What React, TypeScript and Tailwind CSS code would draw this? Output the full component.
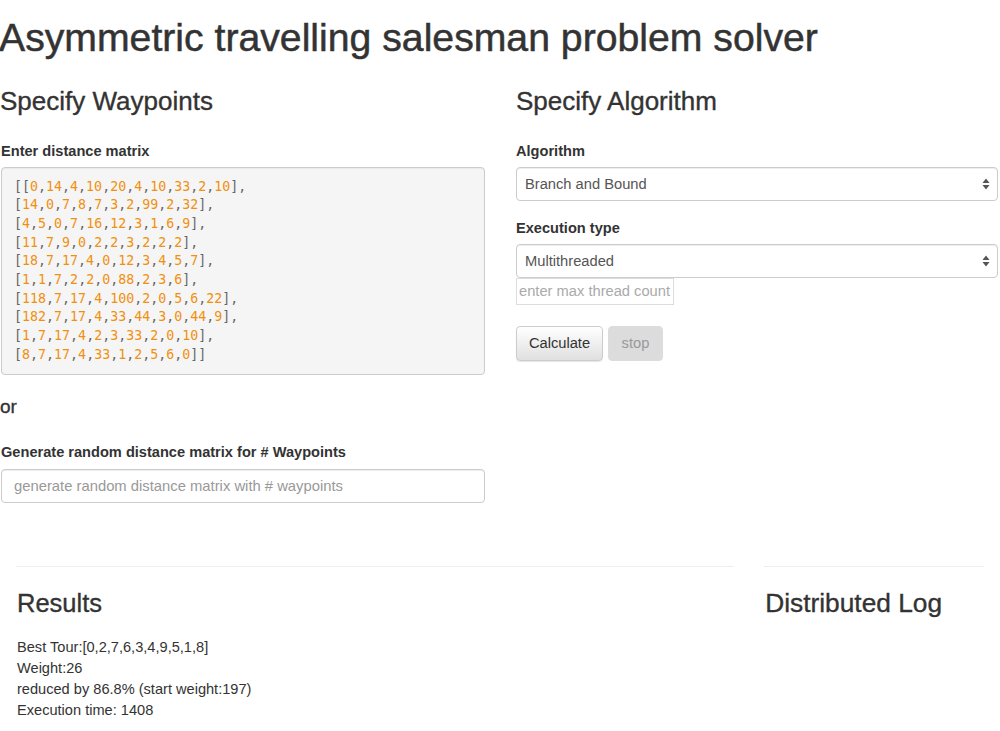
import React from 'react'

const MATRIX = [
  [0, 14, 4, 10, 20, 4, 10, 33, 2, 10],
  [14, 0, 7, 8, 7, 3, 2, 99, 2, 32],
  [4, 5, 0, 7, 16, 12, 3, 1, 6, 9],
  [11, 7, 9, 0, 2, 2, 3, 2, 2, 2],
  [18, 7, 17, 4, 0, 12, 3, 4, 5, 7],
  [1, 1, 7, 2, 2, 0, 88, 2, 3, 6],
  [118, 7, 17, 4, 100, 2, 0, 5, 6, 22],
  [182, 7, 17, 4, 33, 44, 3, 0, 44, 9],
  [1, 7, 17, 4, 2, 3, 33, 2, 0, 10],
  [8, 7, 17, 4, 33, 1, 2, 5, 6, 0],
]

const FONT = { fontFamily: '"Liberation Sans", Arial, sans-serif' }
const MONO = { fontFamily: '"DejaVu Sans Mono", "Liberation Mono", monospace' }

function Arrows() {
  return (
    <svg width="8" height="12" viewBox="0 0 8 12" className="text-[#555]">
      <path d="M4 0.5 L7.5 5 L0.5 5 Z" fill="currentColor" />
      <path d="M4 11.5 L7.5 7 L0.5 7 Z" fill="currentColor" />
    </svg>
  )
}

function Select({ value }: { value: string }) {
  return (
    <div className="h-[34px] rounded-[4px] border border-[#ccc] bg-white flex items-center justify-between pl-[8px] pr-[7px] text-[14.7px] text-[#555] shadow-[inset_0_1px_1px_rgba(0,0,0,0.075)]">
      <span>{value}</span>
      <Arrows />
    </div>
  )
}

function Label({ children }: { children: React.ReactNode }) {
  return <p className="text-[14.6px] leading-[20px] font-bold text-[#333] mb-[6px]">{children}</p>
}

export default function App() {
  return (
    <div className="bg-white text-[#333] min-h-[731px]" style={FONT}>
      <h1 className="text-[39.2px] leading-[44px] pt-[16px] -ml-[1px] [-webkit-text-stroke:0.5px_#333]">
        Asymmetric travelling salesman problem solver
      </h1>

      <div className="flex gap-[31px] mt-[28px] pl-[1px]">
        <div className="w-[484px]">
          <h2 className="text-[26px] leading-[26px] mb-[27px] -ml-[1px] [-webkit-text-stroke:0.35px_#333]">
            Specify Waypoints
          </h2>
          <Label>Enter distance matrix</Label>
          <div
            className="rounded-[4px] border border-[#ccc] bg-[#f5f5f5] pl-[12px] py-[9.5px] text-[13.3px] leading-[18.67px] shadow-[inset_0_1px_1px_rgba(0,0,0,0.05)]"
            style={MONO}
          >
            {MATRIX.map((row, i) => (
              <div key={i} className="text-[#666]">
                {i === 0 ? '[[' : '['}
                {row.map((n, j) => (
                  <span key={j}>
                    <span className="text-[#f0900e]">{n}</span>
                    {j < row.length - 1 && ','}
                  </span>
                ))}
                {i === MATRIX.length - 1 ? ']]' : '],'}
              </div>
            ))}
          </div>
          <h4 className="text-[19px] leading-[20px] mt-[22px] mb-[25px] -ml-[1px] [-webkit-text-stroke:0.35px_#333]">
            or
          </h4>
          <p className="text-[14.6px] leading-[20px] font-bold text-[#333] mb-[7px]">
            Generate random distance matrix for # Waypoints
          </p>
          <div className="h-[34px] rounded-[4px] border border-[#ccc] bg-white flex items-center px-[12px] text-[14.8px] text-[#999] shadow-[inset_0_1px_1px_rgba(0,0,0,0.075)]">
            generate random distance matrix with # waypoints
          </div>
        </div>

        <div className="w-[482px]">
          <h2 className="text-[26px] leading-[26px] mb-[27px] [-webkit-text-stroke:0.35px_#333]">Specify Algorithm</h2>
          <Label>Algorithm</Label>
          <Select value="Branch and Bound" />
          <p className="text-[14.6px] leading-[20px] font-bold text-[#333] mt-[17px] mb-[6px]">Execution type</p>
          <Select value="Multithreaded" />
          <div className="w-[158px] h-[27px] border border-[#ddd] flex items-center px-[2px] text-[14.7px] text-[#aaa]">
            enter max thread count
          </div>
          <div className="flex gap-[5px] mt-[21px]">
            <button className="h-[35px] w-[87px] rounded-[4px] border border-[#ccc] bg-gradient-to-b from-white to-[#e0e0e0] text-[14.7px] text-[#333] shadow-[0_1px_1px_rgba(0,0,0,0.1)]">
              Calculate
            </button>
            <button className="h-[35px] w-[55px] rounded-[4px] border border-[#ddd] bg-[#dcdcdc] text-[14.7px] text-[#999]">
              stop
            </button>
          </div>
        </div>
      </div>

      <div className="flex gap-[30px] px-[16px] mt-[63px]">
        <div className="w-[719px]">
          <div className="border-t border-[#eee]" />
          <h3 className="text-[25.5px] leading-[26px] mt-[23px] mb-[21px] ml-[1px] [-webkit-text-stroke:0.35px_#333]">
            Results
          </h3>
          <div className="text-[14.6px] leading-[21px] ml-[1px]">
            <p>Best Tour:[0,2,7,6,3,4,9,5,1,8]</p>
            <p>Weight:26</p>
            <p>reduced by 86.8% (start weight:197)</p>
            <p>Execution time: 1408</p>
          </div>
        </div>
        <div className="w-[220px]">
          <div className="border-t border-[#eee]" />
          <h3 className="text-[26.3px] leading-[26px] mt-[23px] ml-[1px] [-webkit-text-stroke:0.35px_#333]">
            Distributed Log
          </h3>
        </div>
      </div>
    </div>
  )
}
